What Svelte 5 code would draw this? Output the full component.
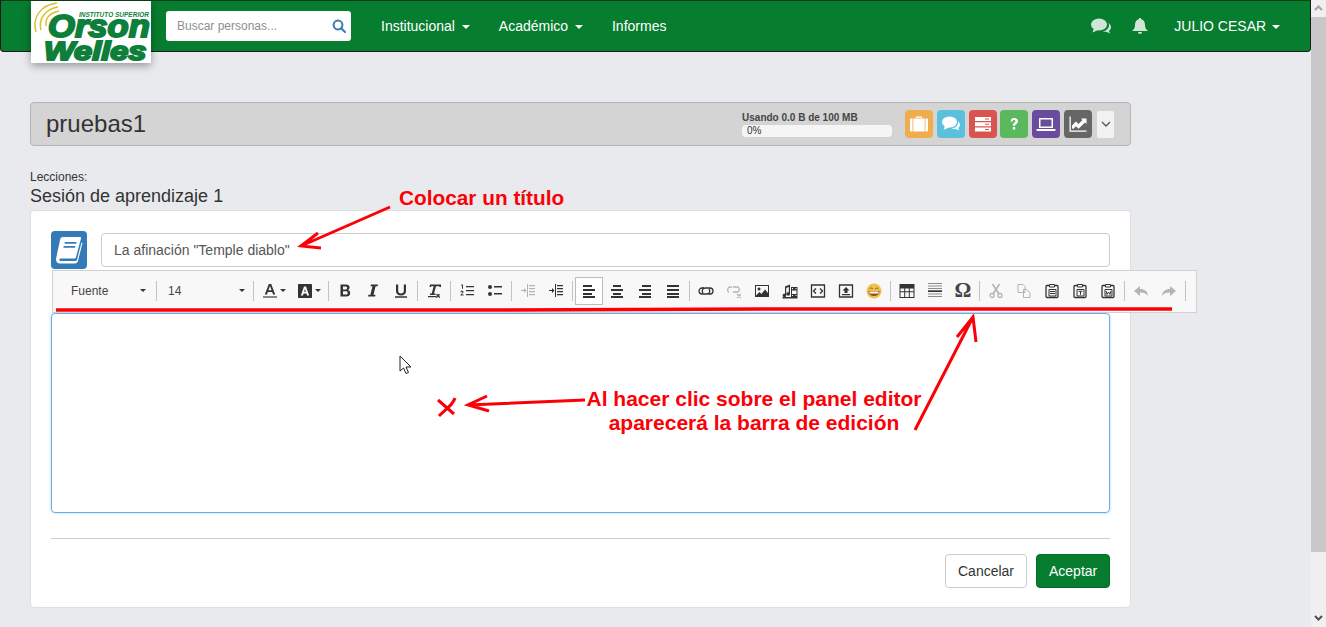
<script>
  const pageBtns = [
    { color: "#f0ad4e", icon: "case" },
    { color: "#5bc0de", icon: "chat" },
    { color: "#d9534f", icon: "server" },
    { color: "#5cb85c", icon: "help" },
    { color: "#6a4c9c", icon: "laptop" },
    { color: "#666666", icon: "chart" },
  ];
</script>

{#snippet caret(color = "#333")}
  <svg class="caret" width="8" height="4" viewBox="0 0 8 4"><path d="M0 0h8L4 4z" fill={color} /></svg>
{/snippet}

{#snippet tool(path, off = false, fill = false)}
  <span class="tool" class:off>
    <svg width="16" height="16" viewBox="0 0 16 16" fill={fill ? "currentColor" : "none"} stroke={fill ? "none" : "currentColor"} stroke-width="1.3">
      {@html path}
    </svg>
  </span>
{/snippet}

<div class="page">
  <nav class="navbar">
    <div class="logo">
      <svg class="arcs" width="36" height="48" viewBox="0 0 36 48" fill="none" stroke="#d9c030" stroke-width="1.5">
        <path d="M3 30C-1 15 8 3 24 1" />
        <path d="M8 28C5 16 13 7 25 5" />
        <path d="M13 24C12 16 17 11 26 9" />
      </svg>
      <span class="logo-top">INSTITUTO SUPERIOR</span>
      <span class="logo-orson">Orson</span>
      <span class="logo-welles">Welles</span>
    </div>
    <div class="search">
      <span>Buscar personas...</span>
      <svg width="14" height="14" viewBox="0 0 14 14" fill="none" stroke="#337ab7" stroke-width="2"><circle cx="6" cy="6" r="4.4" /><path d="M9.2 9.2 13 13" stroke-linecap="round" /></svg>
    </div>
    <ul class="menu">
      <li>Institucional {@render caret("#fff")}</li>
      <li>Académico {@render caret("#fff")}</li>
      <li>Informes</li>
    </ul>
    <div class="nav-right">
      <svg width="20" height="16" viewBox="0 0 20 16" fill="#cfe6d6">
        <ellipse cx="8" cy="6.5" rx="8" ry="6" />
        <path d="M3 10 1.5 14.5 7 12z" />
        <path d="M17 5c2 1 3 2.600 3 4.300 0 1.500-.8 2.700-2 3.600l1 2.600-3.600-1.800c-1.200.3-2.500.2-3.600-.2 3.400-.5 6.200-3 6.200-6.200 0-.8-.3-1.600-1-2.300z" />
      </svg>
      <svg width="16" height="18" viewBox="0 0 16 18" fill="#cfe6d6">
        <path d="M8 1c.8 0 1.300.5 1.300 1.200C11.800 2.800 13 5 13 8c0 3 1 4.500 3 6H0c2-1.500 3-3 3-6 0-3 1.200-5.200 3.700-5.800C6.700 1.500 7.200 1 8 1z" />
        <path d="M6 15h4a2 2 0 0 1-4 0z" />
      </svg>
      <span class="user">JULIO CESAR {@render caret("#fff")}</span>
    </div>
  </nav>

  <main class="content">
    <header class="course-bar">
      <h1>pruebas1</h1>
      <div class="usage">
        <small>Usando 0.0 B de 100 MB</small>
        <div class="progress">0%</div>
      </div>
      <div class="page-btns">
        {#each pageBtns as b}
          <span class="page-btn" style="background:{b.color}">
            <svg width="20" height="20" viewBox="0 0 20 20" fill="#fff">
              {#if b.icon === "case"}
                <path d="M7 4V2.500h6V4h-1.200V3.700H8.200V4zM1 5.500C1 5 1.400 4.500 2 4.500h1.500v13H2c-.6 0-1-.5-1-1zM4.300 4.500h11.400v13H4.300zM16.500 4.500H18c.6 0 1 .5 1 1v11c0 .5-.4 1-1 1h-1.500z" />
              {:else if b.icon === "chat"}
                <ellipse cx="8.500" cy="8" rx="7.500" ry="5.500" />
                <path d="M4 11.500 2.500 16 9 13z" />
                <path d="M17 7.500c1.300.8 2 2 2 3.300 0 1.300-.7 2.400-1.800 3.200l.8 2.500-3.200-1.600c-1.400.4-3 .2-4.200-.4 3.500-.2 6.900-2.600 6.400-7z" />
              {:else if b.icon === "server"}
                <path d="M2 3h16v4H2zM2 8.300h16v4H2zM2 13.500h16v4H2z" />
                <path d="M12 4.500h4v1h-4zM12 9.800h4v1h-4zM12 15h4v1h-4z" fill={b.color} />
              {:else if b.icon === "help"}
                <path d="M6.500 7.500C6.700 5 8.200 4 10.200 4c2.200 0 3.800 1.300 3.800 3.200 0 1.500-.9 2.300-1.900 3-.8.500-1 .8-1 1.600H8.800c0-1.500.3-2.200 1.400-3 .8-.6 1.200-1 1.200-1.600 0-.7-.5-1.200-1.300-1.200-.9 0-1.300.6-1.400 1.500zM8.800 13h2.400v2.500H8.800z" />
              {:else if b.icon === "laptop"}
                <path fill-rule="evenodd" d="M4 4h12c.6 0 1 .4 1 1v9H3V5c0-.6.4-1 1-1zm.5 1.500v7h11v-7zM0.500 15h19v1c0 .6-.4 1-1 1h-17c-.6 0-1-.4-1-1z" />
              {:else}
                <path d="M1.500 2.500h1.300v14h15.700v1.300h-17z" />
                <path d="M4 14.500v-3l4-4 2.500 2.500L14.500 6 13 4.500h5.500V10L17 8.500l-6.500 6.300L8 12.300l-2.500 2.500z" />
              {/if}
            </svg>
          </span>
        {/each}
        <span class="more">
          <svg width="10" height="6" viewBox="0 0 10 6" fill="none" stroke="#555" stroke-width="1.300"><path d="M1 1l4 4 4-4" /></svg>
        </span>
      </div>
    </header>

    <div class="lesson-head">
      <span>Lecciones:</span>
      <h2>Sesión de aprendizaje 1</h2>
    </div>

    <section class="card">
      <div class="title-row">
        <span class="book">
          <svg width="28" height="30" viewBox="0 0 28 30" fill="#fff">
            <path fill-rule="evenodd" d="M8 2h17c.8 0 1.200.6 1 1.400L21 22c-.3 1-1 1.500-2 1.500H5.500c-1.500 0-1.500 2.500 0 2.500H20.500c.7 0 1.200-.4 1.400-1L26.500 7.500 27.500 8l-4.600 18c-.4 1.500-1.300 2.500-3 2.500H5c-3 0-4.500-2.500-3.800-5.500L5 5c.4-1.800 1.300-3 3-3zM10 7l-.5 1.800h11.600L21.600 7zM8.800 11l-.5 1.800h11.600l.5-1.800z" />
          </svg>
        </span>
        <div class="title-input">La afinación "Temple diablo"</div>
      </div>
      <div class="editor"></div>
      <hr />
      <div class="actions">
        <button class="cancel">Cancelar</button>
        <button class="accept">Aceptar</button>
      </div>
    </section>
  </main>

  <div class="toolbar">
    <span class="combo font">Fuente {@render caret()}</span>
    <i class="sep"></i>
    <span class="combo size">14 {@render caret()}</span>
    <i class="sep"></i>
    <span class="color">
      <svg width="16" height="16" viewBox="0 0 16 16" fill="#333"><path d="M6.800 1h2.400l4 10.500H11L10.200 9H5.800L5 11.500H2.800zM6.400 7.200h3.200L8 3z" /><path d="M1 13h14v2H1z" fill="#888" /></svg>
      {@render caret()}
    </span>
    <span class="color">
      <svg width="16" height="16" viewBox="0 0 16 16"><path fill="#333" fill-rule="evenodd" d="M2 1h12c.6 0 1 .4 1 1v12c0 .6-.4 1-1 1H2c-.6 0-1-.4-1-1V2c0-.6.4-1 1-1zm5 2.500L3.800 12.500H6l.6-2h2.800l.6 2h2.200L9 3.500zM7.200 8.800 8 5.800l.8 3z" /></svg>
      {@render caret()}
    </span>
    <i class="sep"></i>
    {@render tool('<path d="M3.500 1.500h5.500c2.200 0 3.600 1.100 3.600 3 0 1.200-.6 2.100-1.600 2.500 1.400.4 2.200 1.500 2.200 2.900 0 2.200-1.600 3.600-3.800 3.600H3.500zm2.500 2v2.900h2.500c1 0 1.600-.6 1.600-1.500 0-.9-.6-1.400-1.600-1.400zm0 4.800v3.200h3c1.100 0 1.700-.6 1.700-1.600S10.100 8.300 9 8.300z" fill-rule="evenodd"/>', false, true)}
    {@render tool('<path d="M6 1.500h7l-.4 1.800h-2L8.500 11.700h2l-.4 1.800H3l.4-1.800h2l2.100-8.400h-2z"/>', false, true)}
    {@render tool('<path d="M3 1.500h2.200v6.300c0 1.800.9 2.700 2.800 2.700s2.800-.9 2.800-2.700V1.500H13v6.500c0 3-1.800 4.400-5 4.400S3 11 3 8zM2 13.300h12v1.400H2z"/>', false, true)}
    <i class="sep"></i>
    {@render tool('<path d="M4 1.500h11V4h-1.500l-.2-.8H10L8 10.500h1.500V12H4v-1.500h1.700l2-7.300H5.200L5 4H3.500zM2 13h8v1.300H2zM11 10.800l1 1 1-1 1 1-1 1 1.300 1.400-1 .9-1.300-1.300-1.300 1.300-1-.9 1.300-1.400-1-1z"/>', false, true)}
    <i class="sep"></i>
    {@render tool('<path d="M7 3h8v1.300H7zM7 7h8v1.300H7zM7 11h8v1.300H7zM2.500 1.500H4v4.300H3V2.800H2.300zM1.500 9.200c0-.9.700-1.400 1.500-1.400s1.500.5 1.500 1.300c0 .7-.5 1.200-1.800 2.400h1.900v1H1.500v-.8c1.500-1.400 2-1.900 2-2.500 0-.3-.2-.5-.5-.5s-.5.200-.5.500z"/>', false, true)}
    {@render tool('<circle cx="3" cy="4" r="2"/><circle cx="3" cy="11" r="2"/><path d="M7 3h8v1.500H7zM7 10h8v1.500H7z"/>', false, true)}
    <i class="sep"></i>
    {@render tool('<path d="M9 2h6v1.200H9zM9 5h6v1.200H9zM9 8h6v1.200H9zM9 11h6v1.200H9zM7 1h1v13H7zM1 7h3V5l2.500 2.500L4 10V8H1z"/>', true, true)}
    {@render tool('<path d="M9 2h6v1.200H9zM9 5h6v1.200H9zM9 8h6v1.200H9zM9 11h6v1.200H9zM7 1h1v13H7zM1 7h3V5l2.500 2.500L4 10V8H1z"/>', false, true)}
    <i class="sep"></i>
    <span class="tool active"><svg width="16" height="16" viewBox="0 0 16 16" fill="currentColor"><path d="M2 2h9v2H2zM2 6h12v2H2zM2 10h9v2H2zM2 13h12v2H2z" /></svg></span>
    {@render tool('<path d="M4 2h8v2H4zM2 6h12v2H2zM4 10h8v2H4zM2 13h12v2H2z"/>', false, true)}
    {@render tool('<path d="M5 2h9v2H5zM2 6h12v2H2zM5 10h9v2H5zM2 13h12v2H2z"/>', false, true)}
    {@render tool('<path d="M2 2h12v2H2zM2 6h12v2H2zM2 10h12v2H2zM2 13h12v2H2z"/>', false, true)}
    <i class="sep"></i>
    {@render tool('<path d="M6 5H4a3 3 0 0 0 0 6h5a3 3 0 0 0 2-5M10 11h2a3 3 0 0 0 0-6H7a3 3 0 0 0-2 5"/>')}
    <span class="tool off"><svg width="16" height="16" viewBox="0 0 16 16" fill="none" stroke="currentColor" stroke-width="1.300"><path d="M6 4H4a3 3 0 0 0-1 5.500M7 9h5a3 3 0 0 0 0-5H7M11 11l4 4M15 11l-4 4" /></svg></span>
    {@render tool('<path d="M1 2h14v12H1zM2 3v9.500l3.500-3.500 2 2 3.500-4.500 3 3.500V3z M5 4.500a1.500 1.500 0 1 0 .01 0z" fill-rule="evenodd"/>', false, true)}
    {@render tool('<path fill-rule="evenodd" d="M9 4h6.500v10H9zM10 5v1.300h1V5zM13.500 5v1.300h1V5zM10 7.500v3.500h4.500V7.500zM10 12v1h1v-1zM13.500 12v1h1v-1z"/><path d="M3 3.500 8 1.500v9.500a1.800 1.800 0 1 1-1.200-1.700V4L4.200 5v7.500a1.800 1.800 0 1 1-1.200-1.700z"/><path d="M.5 14h15v1.500H.5z"/>', false, true)}
    {@render tool('<path d="M1.500 2h13v12h-13z"/><path d="M6 5.500 3.500 8 6 10.500M10 5.500 12.500 8 10 10.500"/>')}
    {@render tool('<path d="M1.500 2h13v12h-13z"/><path d="M8 4l3.500 3.500H9.500V10h-3V7.500h-2zM4 11h8v1.300H4z" fill="currentColor" stroke="none"/>')}
    <span class="tool">
      <svg width="16" height="16" viewBox="0 0 16 16">
        <circle cx="8" cy="8" r="7.500" fill="#f2c04c" />
        <path d="M2.500 8h11c0 3.200-2.400 5-5.500 5S2.500 11.200 2.500 8z" fill="#8a5a1a" />
        <path d="M3.500 8.500h9v2h-9z" fill="#fff" />
        <path d="M3.500 6c.8-1.300 2.600-1.300 3.400 0M9.100 6c.8-1.300 2.600-1.300 3.400 0" fill="none" stroke="#8a5a1a" />
      </svg>
    </span>
    <i class="sep"></i>
    {@render tool('<path fill-rule="evenodd" d="M0.500 1h15v14h-15zM1.500 5.500v2.800h3.700V5.500zm4.700 0v2.800h3.600V5.500zm4.600 0v2.800h3.700V5.500zM1.500 9.300V14h3.700V9.300zm4.700 0V14h3.600V9.300zm4.600 0V14h3.700V9.300z"/>', false, true)}
    <span class="tool"><svg width="16" height="16" viewBox="0 0 16 16" fill="currentColor"><path d="M1 0h14v1H1zM1 2.500h14v1H1zM1 5h14v1H1z" opacity=".55" /><path d="M1 7.300h14v1.700H1z" /><path d="M1 10.500h14v1H1zM1 13h14v1H1z" opacity=".55" /></svg></span>
    <span class="tool omega">Ω</span>
    <i class="sep"></i>
    {@render tool('<circle cx="4" cy="12.500" r="2"/><circle cx="12" cy="12.500" r="2"/><path d="M5.200 10.800 11.500 1M10.800 10.800 4.500 1" stroke-width="1.600"/>', true)}
    {@render tool('<path d="M2 1.500h5l2 2v6H2zM7.500 6.500h3l3.500 3v5H7.500z" stroke-width="1"/>', true)}
    {@render tool('<path d="M5 2.500H3c-.5 0-1 .4-1 1v10c0 .6.500 1 1 1h10c.6 0 1-.4 1-1v-10c0-.6-.4-1-1-1h-2"/><path d="M5.500 1.500h5v2.500h-5zM5 6.500h7v6.500H5z" stroke-width="1"/><path d="M6 8.500h5M6 10.500h5" stroke-width="1"/>')}
    {@render tool('<path d="M5 2.500H3c-.5 0-1 .4-1 1v10c0 .6.500 1 1 1h10c.6 0 1-.4 1-1v-10c0-.6-.4-1-1-1h-2"/><path d="M5.500 1.500h5v2.500h-5zM5 6.500h7v6.500H5z" stroke-width="1"/><path d="M6.500 8.300h4M8.500 8.300v3.500" stroke-width="1"/>')}
    {@render tool('<path d="M5 2.500H3c-.5 0-1 .4-1 1v10c0 .6.500 1 1 1h10c.6 0 1-.4 1-1v-10c0-.6-.4-1-1-1h-2"/><path d="M5.500 1.500h5v2.500h-5zM5 6.500h7v6.500H5z" stroke-width="1"/><path d="M6 8l1 3.500L8.500 9 10 11.500 11 8" stroke-width="1"/>')}
    <i class="sep"></i>
    {@render tool('<path d="M7 3v3c4.500 0 7.500 2 8 7-1.500-2.500-4-3.500-8-3.500V13L1 8z"/>', true, true)}
    {@render tool('<path d="M9 3v3C4.500 6 1.500 8 1 13c1.500-2.500 4-3.500 8-3.500V13l6-5z"/>', true, true)}
    <i class="sep"></i>
  </div>

  <svg class="marks" width="1326" height="627" viewBox="0 0 1326 627" fill="none" stroke="#fb0007" stroke-width="3">
    <path d="M56 310 470 310 800 309 1172 309" stroke-width="3.500" />
    <path d="M390 207 301 246M318 233 301 246 321 248" />
    <path d="M915 430 973 317M957 337 973 317 976 342" />
    <path d="M585 400 468 405M487 396 468 405 489 411" />
    <path d="M438 400 454 414M455 398C453 405 445 410 439 416" />
    <path d="M400 356v15l3.500-3 2.500 5.500 2.500-1-2.500-5.500h5z" stroke="#222" stroke-width="1" fill="#fff" />
  </svg>
  <span class="note note-title">Colocar un título</span>
  <span class="note note-editor">Al hacer clic sobre el panel editor<br />aparecerá la barra de edición</span>

  <div class="scrollbar">
    <svg width="15" height="17" viewBox="0 0 15 17" fill="none" stroke="#a3a3a3" stroke-width="2"><path d="M4 10l3.500-3.500L11 10" /></svg>
    <div class="thumb"></div>
    <svg class="down" width="15" height="17" viewBox="0 0 15 17" fill="none" stroke="#505050" stroke-width="2"><path d="M4 6l3.500 3.500L11 6" /></svg>
  </div>
</div>

<style>
  :global(body) {
    overflow: hidden;
    background: #e9eaed;
  }

  .page {
    position: relative;
    height: 627px;
    width: 1326px;
    font-family: "Liberation Sans", Arial, sans-serif;
    color: #333;
    font-size: 14px;
  }

  .navbar {
    display: flex;
    align-items: center;
    width: 1311px;
    height: 52px;
    box-sizing: border-box;
    padding-left: 30px;
    background: #077d2f;
    border: 1px solid #1a1a1a;
    border-top-color: #0d3d1c;
    border-radius: 0 0 4px 4px;
  }

  .logo {
    position: relative;
    align-self: flex-start;
    flex: none;
    width: 120px;
    height: 62px;
    background: #fff;
    box-shadow: 0 3px 8px rgba(0, 0, 0, 0.35);
    color: #0e7e3b;
    font-weight: 700;
    font-style: italic;
  }

  .arcs {
    position: absolute;
    left: 2px;
    top: 1px;
  }

  .logo-top {
    position: absolute;
    left: 48px;
    top: 11px;
    font-size: 6.500px;
    line-height: 5px;
    white-space: nowrap;
  }

  .logo-orson,
  .logo-welles {
    position: absolute;
    line-height: 18px;
    -webkit-text-stroke: 2px #0e7e3b;
    white-space: nowrap;
    transform-origin: left center;
  }

  .logo-orson {
    left: 17px;
    top: 16px;
    font-size: 32px;
    transform: scaleX(1.08);
  }

  .logo-welles {
    left: 13px;
    top: 41px;
    font-size: 26px;
    transform: scaleX(1.25);
  }

  .search {
    display: flex;
    align-items: center;
    justify-content: space-between;
    width: 185px;
    height: 30px;
    box-sizing: border-box;
    margin-left: 15px;
    padding: 0 5px 0 11px;
    background: #fff;
    border-radius: 3px;
    color: #8e8e93;
    font-size: 12px;
    margin-top: -1px;
  }

  .menu {
    display: flex;
    gap: 29px;
    list-style: none;
    margin: 0 0 0 30px;
    padding: 0;
    color: #fff;
    font-size: 14px;
  }

  .caret {
    margin-left: 3px;
    vertical-align: middle;
  }

  .nav-right {
    display: flex;
    align-items: center;
    margin-left: auto;
    padding-right: 30px;
    gap: 21px;
    color: #fff;
  }

  .user {
    margin-left: 5px;
  }

  .user .caret {
    margin-left: 2px;
  }

  .content {
    width: 1101px;
    margin-left: 30px;
    padding-top: 50px;
  }

  .course-bar {
    display: flex;
    align-items: center;
    height: 44px;
    box-sizing: border-box;
    padding: 0 16px 0 15px;
    background: #d4d4d4;
    border: 1px solid #b5b5b5;
    border-radius: 4px;
  }

  .course-bar h1 {
    flex: 1;
    margin: 0;
    font-size: 24px;
    font-weight: 400;
    color: #333;
  }

  .usage {
    width: 150px;
    margin-right: 13px;
    margin-top: -1px;
  }

  .usage small {
    display: block;
    font-size: 10px;
    font-weight: 700;
    color: #444;
    line-height: 13px;
    white-space: nowrap;
  }

  .progress {
    height: 12px;
    line-height: 12px;
    padding-left: 5px;
    font-size: 10px;
    background: #f5f5f5;
    border-radius: 4px;
    color: #333;
    margin-top: 1px;
  }

  .page-btns {
    display: flex;
    align-items: center;
    gap: 3.800px;
  }

  .page-btn {
    display: flex;
    align-items: center;
    justify-content: center;
    width: 28px;
    height: 28px;
    border-radius: 4px;
  }

  .more {
    display: flex;
    align-items: center;
    justify-content: center;
    width: 17px;
    height: 27px;
    margin-left: 1.200px;
    background: #f2f2f2;
    border-radius: 2px;
  }

  .lesson-head {
    margin-top: 25px;
    height: 39px;
  }

  .lesson-head span {
    display: block;
    font-size: 12px;
    line-height: 12px;
  }

  .lesson-head h2 {
    margin: 3px 0 0;
    font-size: 18px;
    font-weight: 400;
    line-height: 20px;
    color: #333;
  }

  .card {
    box-sizing: border-box;
    height: 398px;
    padding: 20px;
    background: #fff;
    border: 1px solid #dfdfdf;
    border-radius: 4px;
  }

  .title-row {
    display: flex;
    align-items: center;
    height: 38px;
    gap: 14px;
  }

  .book {
    display: flex;
    align-items: center;
    justify-content: center;
    width: 36px;
    height: 38px;
    background: #337ab7;
    border-radius: 4px;
  }

  .title-input {
    flex: 1;
    height: 34px;
    box-sizing: border-box;
    padding-left: 12px;
    line-height: 32px;
    border: 1px solid #ccc;
    border-radius: 4px;
    color: #555;
  }

  .editor {
    height: 200px;
    box-sizing: border-box;
    margin-top: 44px;
    border: 1px solid #66afe9;
    border-radius: 4px;
    box-shadow: 0 0 3px rgba(102, 175, 233, 0.5);
  }

  .card hr {
    margin: 25px 0 15px;
    border: 0;
    border-top: 1px solid #ccc;
  }

  .actions {
    display: flex;
    justify-content: flex-end;
    gap: 9px;
  }

  .actions button {
    height: 34px;
    padding: 0 12px;
    font: inherit;
    border-radius: 4px;
    cursor: pointer;
  }

  .cancel {
    width: 82px;
    background: #fff;
    border: 1px solid #ccc;
    color: #333;
  }

  .accept {
    width: 74px;
    background: #077d2f;
    border: 1px solid #066a28;
    color: #fff;
  }

  .toolbar {
    position: absolute;
    left: 52px;
    top: 270px;
    box-sizing: border-box;
    width: 1145px;
    height: 43px;
    padding-bottom: 2px;
    display: flex;
    align-items: center;
    background: #f8f8f8;
    border: 1px solid #d1d1d1;
    color: #333;
  }

  .sep {
    flex: none;
    width: 1px;
    height: 20px;
    margin: 0 2px;
    background: #c4c4c4;
  }

  .combo {
    display: flex;
    align-items: center;
    justify-content: space-between;
    box-sizing: border-box;
    font-size: 12px;
    height: 28px;
    color: #444;
  }

  .combo .caret,
  .color .caret {
    width: 6px;
    height: 3px;
  }

  .color .caret {
    margin-left: 2px;
  }

  .combo.font {
    width: 101px;
    padding: 0 8px 0 18px;
  }

  .combo.size {
    width: 92px;
    padding: 0 6px 0 9px;
  }

  .color {
    display: flex;
    align-items: center;
    justify-content: center;
    width: 35px;
    height: 28px;
  }

  .tool {
    display: flex;
    align-items: center;
    justify-content: center;
    flex: none;
    box-sizing: border-box;
    width: 28px;
    height: 28px;
    color: #333;
  }

  .tool.off {
    color: #b4b4b4;
  }

  .tool.active {
    border: 1px solid #bcbcbc;
    background: #fff;
  }

  .omega {
    font-size: 21px;
    font-weight: 700;
    font-family: "Liberation Serif", serif;
    color: #444;
  }

  .marks {
    position: absolute;
    left: 0;
    top: 0;
    pointer-events: none;
  }

  .note {
    position: absolute;
    color: #fb0007;
    font-weight: 700;
    font-size: 21px;
    line-height: 24px;
    white-space: nowrap;
  }

  .note-title {
    left: 399px;
    top: 186px;
    font-size: 20.800px;
  }

  .note-editor {
    left: 574px;
    width: 360px;
    top: 387px;
    text-align: center;
  }

  .scrollbar {
    position: absolute;
    left: 1311px;
    top: 0;
    width: 15px;
    height: 627px;
    background: #f0f0f0;
  }

  .scrollbar svg {
    display: block;
  }

  .scrollbar .down {
    position: absolute;
    left: 0;
    bottom: 0;
  }

  .thumb {
    height: 535px;
    background: #c8c8c8;
  }
</style>
